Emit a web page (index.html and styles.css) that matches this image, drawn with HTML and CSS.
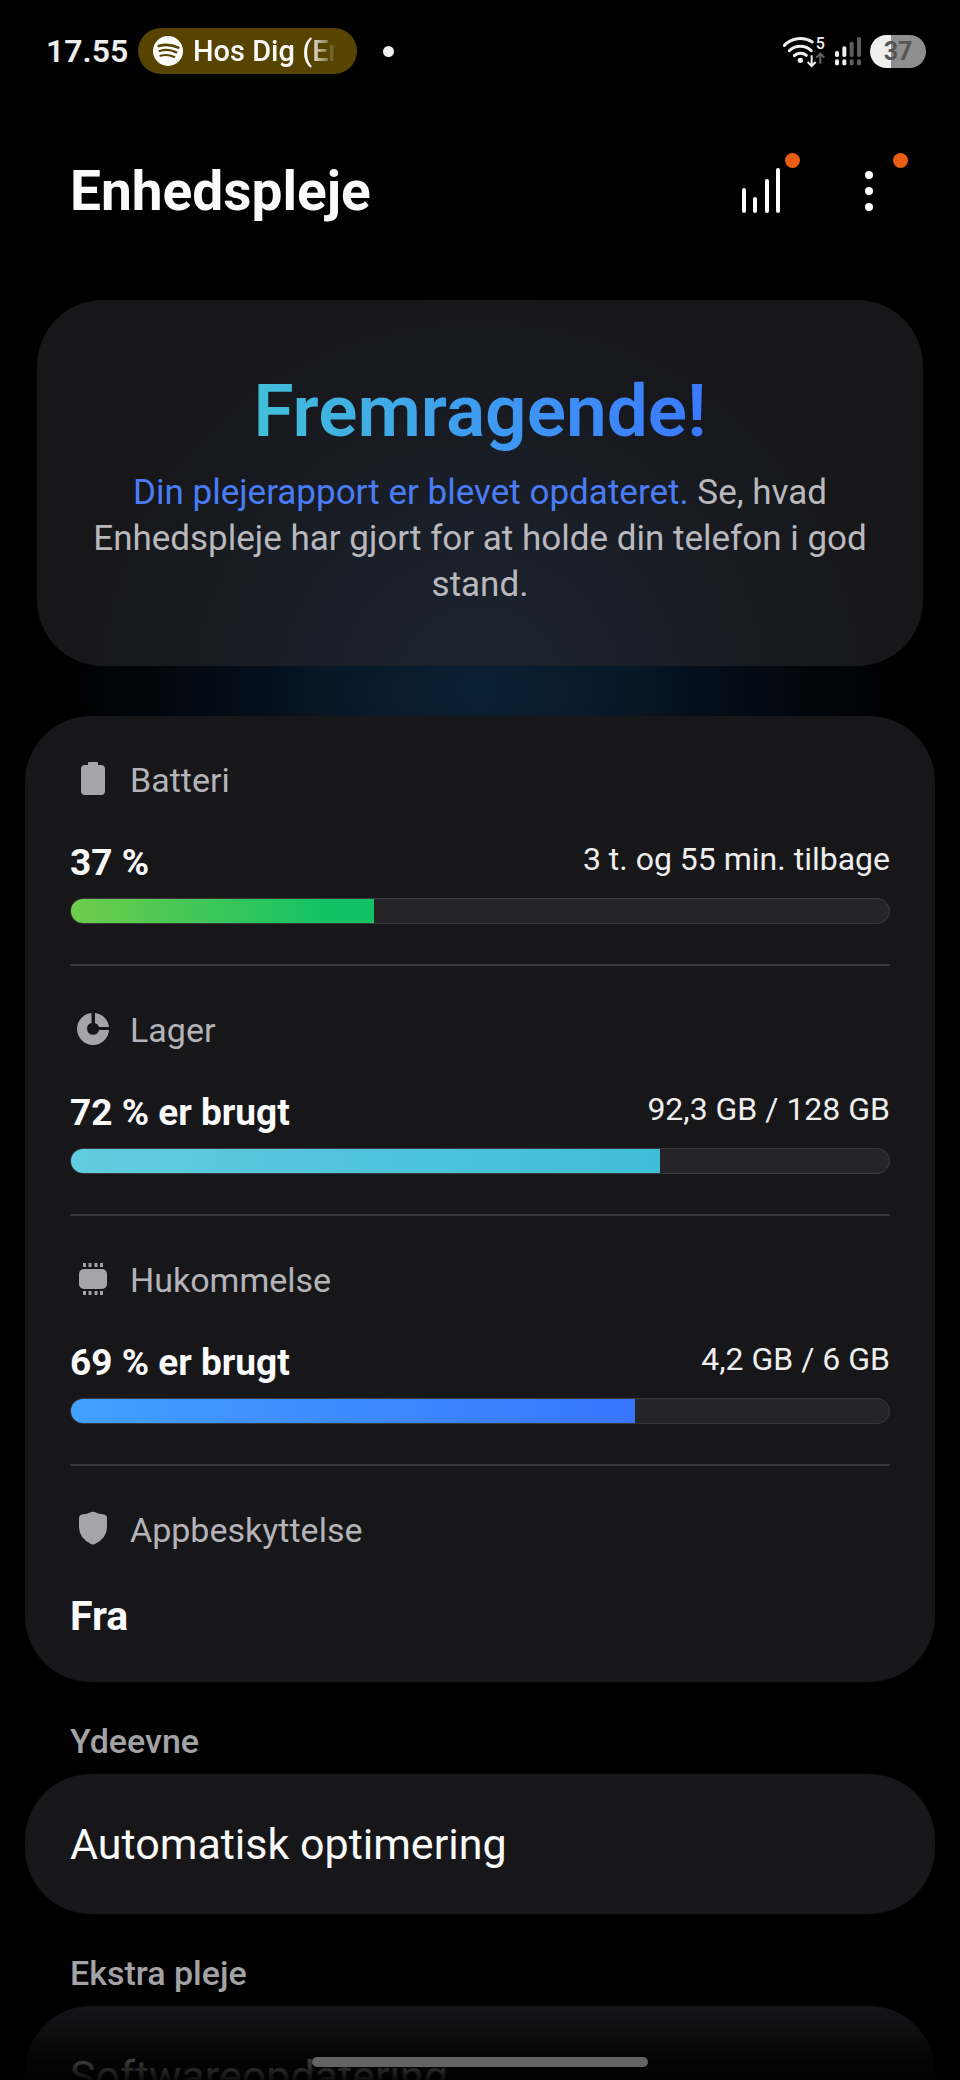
FILE: index.html
```html
<!DOCTYPE html>
<html lang="da">
    <head>
        <meta charset="utf-8">
        <meta name="viewport" content="width=device-width, initial-scale=1">
        <title>Enhedspleje</title>
        <link rel="stylesheet" href="styles.css">
    </head>

    <body>
        <!-- Status bar -->
        <div class="statusbar">
            <span class="clock">17.55</span>
            <div class="media-pill">
                <svg class="media-icon" viewBox="0 0 90 90">
                    <circle cx="45" cy="45" r="45" fill="#fff"/>
                    <g fill="none" stroke="#574400" stroke-linecap="round">
                        <path d="M17 30 Q47 21 76 35" stroke-width="8"/>
                        <path d="M20 45 Q46 37 70 49" stroke-width="7"/>
                        <path d="M22 59 Q44 53 64 63" stroke-width="6"/>
                    </g>
                </svg>
                <span class="media-text">Hos Dig (En</span>
            </div>
            <span class="status-dot"></span>
            <div class="status-icons">
                <svg class="wifi" viewBox="0 0 138 102">
                    <g fill="none" stroke="#eee" stroke-width="9" stroke-linecap="round">
                        <path d="M13 34 A68 68 0 0 1 97 24"/>
                        <path d="M28 50 A47 47 0 0 1 94 50"/>
                        <path d="M43 65 A27 27 0 0 1 79 64"/>
                    </g>
                    <circle cx="61" cy="79" r="8" fill="#eee"/>
                    <text x="121" y="44" class="wifi-gen">5</text>
                    <path d="M95 64 V95 M83 84 L95 96 L107 84" fill="none" stroke="#eee" stroke-width="6"/>
                    <path d="M121 89 V59 M109 71 L121 59 L133 71" fill="none" stroke="#666" stroke-width="6"/>
                </svg>
                <svg class="signal" viewBox="0 0 78 87">
                    <g fill="#eee">
                        <rect x="0" y="42" width="12" height="18" rx="5"/>
                        <rect x="0" y="67" width="12" height="18" rx="5"/>
                        <rect x="22" y="28" width="12" height="32" rx="5"/>
                        <rect x="22" y="67" width="12" height="18" rx="5"/>
                    </g>
                    <g fill="#5c5c5c">
                        <rect x="44" y="14" width="12" height="46" rx="5"/>
                        <rect x="44" y="67" width="12" height="18" rx="5"/>
                        <rect x="66" y="0" width="12" height="60" rx="5"/>
                        <rect x="66" y="67" width="12" height="18" rx="5"/>
                    </g>
                </svg>
                <span class="battery">37</span>
            </div>
        </div>

        <!-- Header -->
        <header class="header">
            <h1>Enhedspleje</h1>
            <div class="actions">
                <button class="action" aria-label="Plejerapport">
                    <svg width="40" height="46" viewBox="0 0 40 46" stroke="#fff" stroke-width="4" stroke-linecap="round">
                        <path d="M3 22V43M14 31V43M26 13V43M37 2V43"/>
                    </svg>
                    <span class="badge"></span>
                </button>
                <button class="action" aria-label="Flere indstillinger">
                    <svg width="40" height="46" viewBox="0 0 40 46" fill="#fff">
                        <circle cx="20" cy="7" r="4"/>
                        <circle cx="20" cy="23" r="4"/>
                        <circle cx="20" cy="39" r="4"/>
                    </svg>
                    <span class="badge"></span>
                </button>
            </div>
        </header>

        <main>
            <!-- Status summary -->
            <div class="glow">
                <section class="summary">
                    <h2>Fremragende!</h2>
                    <p><a href="#rapport">Din plejerapport er blevet opdateret.</a> Se, hvad Enhedspleje har gjort for at holde din telefon i god stand.</p>
                </section>
            </div>

            <!-- Metrics -->
            <section class="card metrics">
                <div class="metric">
                    <div class="label">
                        <svg class="icon" viewBox="0 0 40 40"><path d="M15 3Q15 2 16 2H24Q25 2 25 3V5H28Q32 5 32 9V31Q32 35 28 35H12Q8 35 8 31V9Q8 5 12 5H15Z"/></svg>
                        <span>Batteri</span>
                    </div>
                    <div class="values">
                        <strong>37 %</strong>
                        <span>3 t. og 55 min. tilbage</span>
                    </div>
                    <div class="bar"><div class="fill green" style="width: 37%"></div></div>
                </div>
                <div class="metric">
                    <div class="label">
                        <svg class="icon" viewBox="0 0 40 40"><path d="M18.500 3A16 16 0 1 0 36 20H26A6 6 0 1 1 18.500 13Z"/><path d="M22 3A16 16 0 0 1 36 17H26A6 6 0 0 0 22 13Z"/></svg>
                        <span>Lager</span>
                    </div>
                    <div class="values">
                        <strong>72 % er brugt</strong>
                        <span>92,3 GB / 128 GB</span>
                    </div>
                    <div class="bar"><div class="fill teal" style="width: 72%"></div></div>
                </div>
                <div class="metric">
                    <div class="label">
                        <svg class="icon" viewBox="0 0 40 40">
                            <rect x="6" y="9" width="28" height="20" rx="5"/>
                            <path d="M11.500 3V7M17 3V7M23 3V7M28.500 3V7M11.500 31V35M17 31V35M23 31V35M28.500 31V35" stroke="#a5a4a9" stroke-width="3"/>
                        </svg>
                        <span>Hukommelse</span>
                    </div>
                    <div class="values">
                        <strong>69 % er brugt</strong>
                        <span>4,2 GB / 6 GB</span>
                    </div>
                    <div class="bar"><div class="fill blue" style="width: 69%"></div></div>
                </div>
                <div class="metric">
                    <div class="label">
                        <svg class="icon" viewBox="0 0 40 40"><path d="M18.500 2Q20 1.500 21.500 2Q26 4 31 4.500Q34 5 34 8V17Q34 28 22 34Q20 35 18 34Q6 28 6 17V8Q6 5 9 4.500Q14 4 18.500 2Z"/></svg>
                        <span>Appbeskyttelse</span>
                    </div>
                    <strong class="state">Fra</strong>
                </div>
            </section>

            <h3>Ydeevne</h3>
            <a class="card row" href="#optimering">Automatisk optimering</a>

            <h3>Ekstra pleje</h3>
            <a class="card row" href="#software">Softwareopdatering</a>
        </main>

        <!-- Navigation handle -->
        <div class="navbar"><span class="handle"></span></div>
    </body>
</html>
```

FILE: styles.css
```css
* {
    box-sizing: border-box;
}
body {
    margin: 0;
    height: 100vh;
    overflow: hidden;
    background-color: #000;
    color: #fafafa;
    font-family: Roboto, "Liberation Sans", sans-serif;
}
a {
    color: inherit;
    text-decoration: none;
}

/* Status bar */
.statusbar {
    display: flex;
    align-items: center;
    height: 102px;
    padding: 0 34px 0 46px;
}
.clock {
    width: 92px;
    font-size: 32px;
    font-weight: 600;
    color: #eee;
}
.media-pill {
    display: flex;
    align-items: center;
    gap: 10px;
    width: 219px;
    height: 46px;
    padding: 0 20px 0 15px;
    border-radius: 23px;
    background-color: #574400;
}
.media-icon {
    flex: none;
    width: 30px;
    height: 30px;
}
.media-text {
    overflow: hidden;
    white-space: nowrap;
    font-size: 29px;
    font-weight: 500;
    -webkit-mask-image: linear-gradient(to right, #000 80%, transparent);
    mask-image: linear-gradient(to right, #000 80%, transparent);
}
.status-dot {
    width: 11px;
    height: 11px;
    margin-left: 26px;
    border-radius: 50%;
    background-color: #eee;
}
.status-icons {
    display: flex;
    align-items: center;
    gap: 9px;
    margin-left: auto;
}
.wifi {
    width: 46px;
    height: 34px;
}
.wifi-gen {
    font-size: 48px;
    font-weight: 500;
    text-anchor: middle;
    fill: #eee;
}
.signal {
    width: 26px;
    height: 29px;
}
.battery {
    width: 56px;
    height: 33px;
    border-radius: 17px;
    background: linear-gradient(to right, #eee 37%, #8f8f8f 37%);
    color: #555;
    font-size: 25px;
    font-weight: 700;
    line-height: 33px;
    text-align: center;
}

/* Header */
.header {
    display: flex;
    align-items: center;
    justify-content: space-between;
    height: 178px;
    padding: 0 71px 0 70px;
}
h1 {
    margin: 0;
    font-size: 55px;
    font-weight: 700;
}
.actions {
    display: flex;
    gap: 68px;
}
.action {
    position: relative;
    width: 40px;
    height: 46px;
    padding: 0;
    border: 0;
    background: none;
}
.action svg {
    display: block;
}
.badge {
    position: absolute;
    top: -15px;
    right: -19px;
    width: 15px;
    height: 15px;
    border-radius: 50%;
    background-color: #e95d15;
}

/* Status summary */
.glow {
    padding: 20px 37px 50px;
    background: radial-gradient(ellipse 410px 400px at 50% 94%, #0a2033, #081727 35%, #030a13 68%, #000);
}
.summary {
    padding: 66px 40px 58px;
    border-radius: 66px;
    background-color: rgba(40, 40, 44, 0.58);
    text-align: center;
}
.summary h2 {
    width: fit-content;
    margin: 0 auto 14px;
    font-size: 73px;
    font-weight: 600;
    line-height: 90px;
    background: linear-gradient(to right, #41c0d8, #3e9cf0 50%, #3b78ff);
    -webkit-background-clip: text;
    background-clip: text;
    color: transparent;
}
.summary p {
    margin: 0;
    font-size: 35px;
    line-height: 46px;
    color: #b9b8bd;
}
.summary a {
    color: #4a7df5;
}

/* Cards */
.card {
    margin: 0 25px;
    padding: 0 45px;
    border-radius: 66px;
    background-color: #17171a;
}
.metric {
    padding: 44px 0 40px;
    border-bottom: 2px solid #38383b;
}
.metric:last-child {
    padding-bottom: 43px;
    border-bottom: 0;
}
.label {
    display: flex;
    align-items: center;
    gap: 17px;
    margin-bottom: 43px;
    padding-left: 3px;
    font-size: 34px;
    line-height: 40px;
    color: #b4b3b8;
}
.icon {
    width: 40px;
    height: 40px;
    fill: #a5a4a9;
}
.values {
    display: flex;
    justify-content: space-between;
    margin-bottom: 15px;
    font-size: 32px;
    line-height: 32px;
    color: #eee;
}
.values strong {
    font-size: 37px;
    line-height: 40px;
    color: #fafafa;
}
.bar {
    height: 26px;
    border: 1px solid #3a3a3d;
    border-radius: 13px;
    background-color: #252528;
    overflow: hidden;
}
.fill {
    height: 100%;
}
.green {
    background: linear-gradient(to right, #70cc4a, #12c265 85%);
}
.teal {
    background: linear-gradient(to right, #62cce0, #3fbcd8);
}
.blue {
    background: linear-gradient(to right, #42a0ff, #3875ff);
}
.state {
    display: block;
    font-size: 41px;
    line-height: 46px;
}
h3 {
    margin: 0;
    padding: 36px 70px 10px;
    font-size: 34px;
    font-weight: 500;
    line-height: 46px;
    color: #a3a3a6;
}
.row {
    display: flex;
    align-items: center;
    height: 140px;
    font-size: 43px;
}

/* Navigation handle */
.navbar {
    position: fixed;
    left: 0;
    right: 0;
    bottom: 0;
    display: flex;
    justify-content: center;
    align-items: flex-end;
    height: 76px;
    padding-bottom: 13px;
    background: linear-gradient(to bottom, transparent, rgba(0, 0, 0, 0.7) 65%, rgba(0, 0, 0, 0.95));
}
.handle {
    width: 35%;
    height: 10px;
    border-radius: 5px;
    background-color: #636363;
}
```
